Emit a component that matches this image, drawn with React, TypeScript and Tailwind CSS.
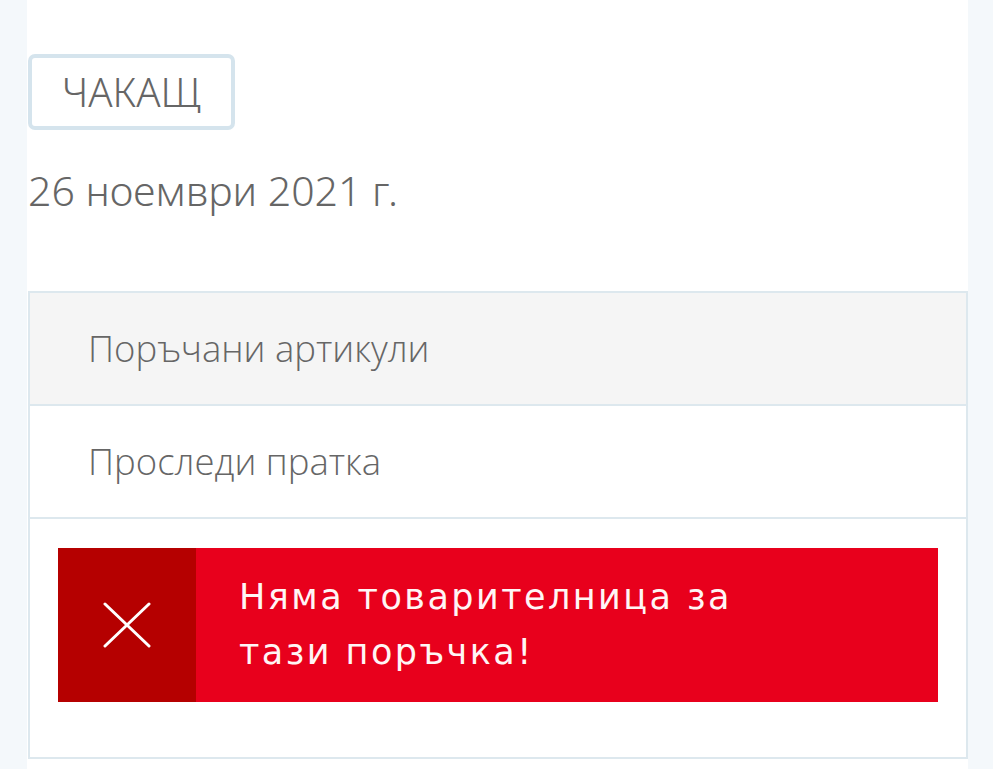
const rows = ["Поръчани артикули", "Проследи пратка"];

export default function App() {
  return (
    <div className="flex min-h-screen bg-[#f4f8fb]">
      <main className="ml-[27px] min-h-screen w-[941px] bg-white pl-px pt-[54px]">
        <div className="inline-flex h-[76px] w-[207px] items-center rounded-[7px] border-4 border-[#d5e4ed] pl-[30px] font-['Noto_Sans',sans-serif] text-[40px] font-light text-[#666]">
          ЧАКАЩ
        </div>
        <p className="mt-[30px] font-['Noto_Sans',sans-serif] text-[41px] font-light leading-[60px] text-[#666]">
          26 ноември 2021 г.
        </p>

        <section className="mt-[71px] border-2 border-[#dde8ee] font-['Open_Sans',sans-serif]">
          {rows.map((label, i) => (
            <div
              key={label}
              className={`flex h-[113px] items-center border-b-2 border-[#dde8ee] pl-[58px] text-[36.5px] font-light text-[#666] ${i === 0 ? "bg-[#f5f5f5]" : "bg-white"}`}
            >
              {label}
            </div>
          ))}
          <div className="px-[28px] pt-[29px] pb-[55px]">
            <div className="flex h-[154px] bg-[#e8001c]">
              <div className="flex w-[138px] shrink-0 items-center justify-center bg-[#b50000]">
                <svg width="48" height="46" viewBox="0 0 48 46" fill="none" stroke="white" strokeWidth="3" strokeLinecap="round">
                  <path d="M2 2 L46 44 M46 2 L2 44" />
                </svg>
              </div>
              <p className="flex items-center pl-[43px] pr-6 font-['DejaVu_Sans',sans-serif] text-[35px] font-normal leading-[55px] tracking-[0.07em] text-[#fff5f5]">
                Няма товарителница за
                <br />
                тази поръчка!
              </p>
            </div>
          </div>
        </section>
      </main>
    </div>
  );
}
